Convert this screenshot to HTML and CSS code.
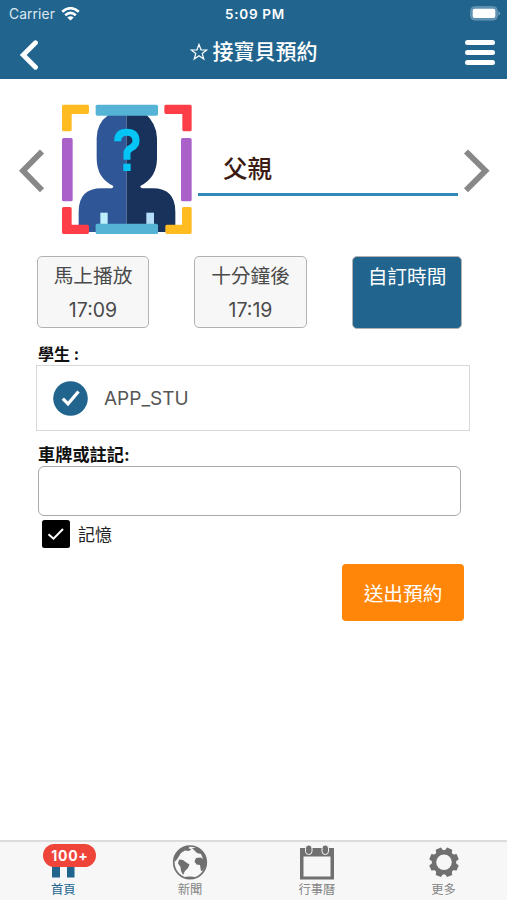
FILE: index.html
```html
<!DOCTYPE html>
<html lang="zh-Hant">
<head>
<meta charset="utf-8">
<title>接寶貝預約</title>
<link rel="stylesheet" href="styles.css">
</head>
<body>
<div class="app">
  <header class="header">
    <div class="status">
      <div class="carrier"><span>Carrier</span>
        <svg width="19" height="14" viewBox="0 0 19 14" fill="none" stroke="#fff" stroke-width="2.6"><path d="M1.200 4.800Q9.500-2.400 17.800 4.800M4.200 8.300Q9.500 3.500 14.800 8.300"/><path d="M9.500 13.600L6.300 10.500Q9.500 7.800 12.700 10.500Z" fill="#fff" stroke="none"/></svg>
      </div>
      <span class="clock">5:09 PM</span>
      <svg class="battery" width="31" height="15" viewBox="0 0 31 15"><rect x=".7" y=".7" width="26.600" height="13.300" rx="4" fill="#5d90b1" stroke="#6897b5"/><rect x="2.700" y="2.700" width="22.600" height="9.300" rx="2" fill="#fff"/><path d="M28.500 5Q31.500 7.300 28.500 9.800Z" fill="#82a9c3"/></svg>
    </div>
    <nav class="nav">
      <svg width="20" height="32" viewBox="0 0 20 32" fill="none" stroke="#fff" stroke-width="4.800" stroke-linecap="round"><path d="M16.500 4.800L4.200 17L16.500 29.300"/></svg>
      <h1 class="title"><svg width="18" height="18" viewBox="0 0 18 18" fill="none" stroke="#fff" stroke-width="1.200"><path d="M9 1.400L11 6.800L16.700 7L12.200 10.500L13.800 16L9 12.800L4.200 16L5.800 10.500L1.300 7L7 6.800Z"/></svg><span>接寶貝預約</span></h1>
      <div class="menu"><i></i><i></i><i></i></div>
    </nav>
  </header>

  <main class="main">
    <section class="person">
      <svg class="arrow" width="28" height="46" viewBox="0 0 28 46"><path d="M25 3.500L6 22.700L25 42.200"/></svg>
      <svg class="avatar" width="130" height="130" viewBox="156 27 390 390">
        <path d="M350 50V411H206V350Q206 280 275 280H302Q310 280 310 273Q260 250 260 190V130Q260 85 295 60Z" fill="#2f5797"/>
        <path d="M350 50H400Q441 85 441 130V190Q441 248 391 273Q391 280 400 280H428Q496 280 496 350V411H350Z" fill="#19325b"/>
        <path d="M323 139Q323 112 350 112Q378 112 378 138Q378 150 366 157Q351 164 351 175V194" fill="none" stroke="#05c5f7" stroke-width="21"/>
        <path d="M340 206H362V228H340Z" fill="#05c5f7"/>
        <path d="M271 353H293V390H271Z" fill="#bdf0fc"/><path d="M409 353H432V390H409Z" fill="#b5dcf9"/>
        <rect x="257" y="29" width="187" height="33" rx="5" fill="#55b4d5"/><rect x="257" y="386" width="187" height="32" rx="5" fill="#55b4d5"/>
        <rect x="156" y="129" width="32" height="190" rx="5" fill="#aa62ca"/><rect x="513" y="129" width="32" height="190" rx="5" fill="#aa62ca"/>
        <path d="M161 29H232Q237 29 237 34V52Q237 57 232 57H185V104Q185 109 180 109H161Q156 109 156 104V34Q156 29 161 29Z" fill="#ffbb20"/>
        <path d="M468 29H540Q545 29 545 34V104Q545 109 540 109H522Q517 109 517 104V57H468Q463 57 463 52V34Q463 29 468 29Z" fill="#fd3e49"/>
        <path d="M161 336H180Q185 336 185 341V389H232Q237 389 237 394V412Q237 417 232 417H161Q156 417 156 412V341Q156 336 161 336Z" fill="#fd3e49"/>
        <path d="M521 336H540Q545 336 545 341V412Q545 417 540 417H471Q466 417 466 412V394Q466 389 471 389H516V341Q516 336 521 336Z" fill="#ffbb20"/>
      </svg>
      <div class="name">父親</div>
      <svg class="arrow" width="28" height="46" viewBox="0 0 28 46"><path d="M4 3.500L23.500 22.700L4 42.200"/></svg>
    </section>

    <section class="times">
      <div class="time"><span>馬上播放</span><span class="digits">17:09</span></div>
      <div class="time"><span>十分鐘後</span><span class="digits">17:19</span></div>
      <div class="time time-active"><span>自訂時間</span></div>
    </section>

    <h2 class="label">學生 :</h2>
    <div class="student">
      <svg width="35" height="35" viewBox="0 0 35 35"><circle cx="17.500" cy="17.500" r="17.300" fill="#21658f"/><path d="M9.800 17.700L15 22.900L25.500 10.500" fill="none" stroke="#fff" stroke-width="3.200"/></svg>
      <span>APP_STU</span>
    </div>

    <h2 class="label label-note">車牌或註記:</h2>
    <input class="note" type="text" aria-label="車牌或註記">
    <div class="remember">
      <svg width="28" height="28" viewBox="0 0 28 28"><rect width="28" height="28" rx="2.500"/><path d="M6.500 14.300L11.500 18.700L21 9" fill="none" stroke="#fff" stroke-width="2"/></svg>
      <span>記憶</span>
    </div>
    <button class="submit">送出預約</button>
  </main>

  <footer class="tabs">
    <div class="tab tab-active">
      <div class="icon"><svg width="36" height="36" viewBox="0 0 36 36"><path d="M18 3L33 16H29.500V33.500H22V22H15V33.500H7V16H3Z" fill="#21658f"/></svg><b class="badge">100+</b></div>
      <span>首頁</span>
    </div>
    <div class="tab">
      <div class="icon"><svg width="36" height="36" viewBox="0 0 36 36"><circle cx="18" cy="18.300" r="16.300" fill="#f8f8f8" stroke="#707070" stroke-width="1.700"/><path d="M3 11L7 6L12 3L18 2L16.500 4.500L19.500 5L17 7L13 6.500L9 9L6.500 13L4.500 16L2.500 18Z" fill="#707070"/><path d="M7 15.500L11 16L13.500 18L17.500 20.500L16 24L13 27L11 31L9 27L8.500 23L6 19.500Z" fill="#707070"/><path d="M20 4L26 4L31 9L34 15L34.500 21L31 26.500L29 27L28 21L24.500 20.500L22.500 17.500L24 14L28.500 13.500L31 15L29 10L25 9L23 7Z" fill="#707070"/><path d="M11 33.500Q17 31.500 25 33.500L18 35Z" fill="#707070"/></svg></div>
      <span>新聞</span>
    </div>
    <div class="tab">
      <div class="icon"><svg width="36" height="36" viewBox="0 0 36 36"><path d="M1 4H35V35.500H1ZM4.500 12.500V32.500H31.500V12.500Z" fill="#707070" fill-rule="evenodd"/><rect x="6.500" y="1" width="6.500" height="9.500" rx="3.200" fill="#707070" stroke="#f7f7f7"/><rect x="23" y="1" width="6.500" height="9.500" rx="3.200" fill="#707070" stroke="#f7f7f7"/></svg></div>
      <span>行事曆</span>
    </div>
    <div class="tab">
      <div class="icon"><svg width="36" height="36" viewBox="0 0 36 36" fill="#707070"><defs><path id="tooth" d="M14 8L15.200 3.500H20.800L22 8Z"/></defs><g transform="rotate(22.500 18 18.300)"><use href="#tooth"/><use href="#tooth" transform="rotate(45 18 18.300)"/><use href="#tooth" transform="rotate(90 18 18.300)"/><use href="#tooth" transform="rotate(135 18 18.300)"/><use href="#tooth" transform="rotate(180 18 18.300)"/><use href="#tooth" transform="rotate(225 18 18.300)"/><use href="#tooth" transform="rotate(270 18 18.300)"/><use href="#tooth" transform="rotate(315 18 18.300)"/></g><circle cx="18" cy="18.300" r="10" fill="none" stroke="#707070" stroke-width="4.400"/></svg></div>
      <span>更多</span>
    </div>
  </footer>
</div>
</body>
</html>
```

FILE: styles.css
```css
* { box-sizing: border-box; }
body {
  margin: 0;
  background: #fff;
  font-family: Inter, "Noto Sans CJK TC", sans-serif;
}
svg { display: block; flex: none; }
.app { display: flex; flex-direction: column; height: 900px; width: 507px; overflow: hidden; }

.header { height: 79px; background: #21658f; color: #fff; flex: none; }
.status {
  display: grid;
  grid-template-columns: 1fr auto 1fr;
  align-items: center;
  height: 27px;
  padding: 0 6px 0 9px;
  font-size: 13.8px;
}
.carrier { display: flex; align-items: center; gap: 6px; color: #dce8f0; letter-spacing: .1px; }
.clock { font-weight: 600; font-size: 13.5px; letter-spacing: .7px; }
.battery { justify-self: end; margin-top: -1px; }
.nav {
  display: grid;
  grid-template-columns: 1fr auto 1fr;
  align-items: center;
  height: 52px;
  padding: 2px 12px 0 19px;
}
.title { display: flex; align-items: center; gap: 5px; margin: -4px 7px 0 0; font-size: 21px; line-height: 30px; font-weight: 500; }
.title svg { margin-top: -1px; }
.menu { display: grid; gap: 5px; justify-self: end; width: 30px; margin-top: -3px; }
.menu i { height: 5px; border-radius: 3px; background: #fff; }

.main { flex: 1; display: flex; flex-direction: column; }
.person { display: flex; height: 130px; margin-top: 25px; padding: 0 16px 0 17px; align-items: center; }
.arrow { fill: none; stroke: #888; stroke-width: 5.8; margin-top: 3px; }
.avatar { margin-left: 17px; }
.name {
  width: 260px;
  height: 52px;
  margin: 1px 4px 0 6px;
  padding: 4px 25px 0;
  border-bottom: 3px solid #3088bd;
  color: #3b1b12;
  font-size: 24.5px;
  line-height: 42px;
  font-weight: 500;
}

.times { display: grid; grid-template-columns: 112px 113px 110px; gap: 45px; margin: 22px 0 0 37px; }
.time {
  display: flex;
  flex-direction: column;
  align-items: center;
  height: 72px;
  padding-top: 2px;
  border: 1px solid #b2b2b2;
  border-radius: 5px;
  background: #f7f7f7;
  color: #4a4a4a;
  font-size: 19.7px;
  line-height: 34px;
}
.digits { font-size: 19.5px; }
.time-active { background: #21658f; color: #fff; height: 73px; padding-top: 3px; }

.label { margin: 15px 0 1px 38px; font-size: 16px; line-height: 20px; font-weight: 700; color: #111; }
.student {
  display: flex;
  align-items: center;
  gap: 16px;
  width: 434px;
  height: 66px;
  margin-left: 36px;
  padding-left: 16px;
  border: 1px solid #d8d8d8;
  color: #555;
  font-size: 19px;
}
.label-note { margin-top: 13px; margin-bottom: 0; font-size: 17.2px; line-height: 22px; }
.note { width: 423px; height: 50px; margin: 0 0 0 38px; padding: 0 10px; border: 1px solid #aaa; border-radius: 6px; background: #fff; font: inherit; }
.remember { display: flex; align-items: center; gap: 8px; margin: 4px 0 0 42px; height: 28px; font-size: 17px; color: #222; }
.remember span { margin-top: -2px; }
.submit {
  width: 122px;
  height: 57px;
  margin: 16px 0 0 342px;
  padding: 0;
  border: 0;
  border-radius: 4px;
  background: #ff8609;
  color: #fff;
  font-family: inherit;
  font-size: 19.7px;
}

.tabs { display: grid; grid-template-columns: repeat(4, 1fr); height: 60px; border-top: 2px solid #dcdcdc; background: #f7f7f7; flex: none; }
.tab { display: flex; flex-direction: column; align-items: center; padding-top: 2px; color: #858585; font-size: 12.3px; line-height: 20px; }
.icon { position: relative; height: 36px; }
.tab-active { color: #21658f; }
.badge {
  position: absolute;
  left: -2px;
  top: 0;
  width: 53px;
  height: 23px;
  border-radius: 12px;
  background: #ef443a;
  color: #fff;
  font-size: 14px;
  letter-spacing: .7px;
  font-weight: 700;
  line-height: 23px;
  text-align: center;
}
```
